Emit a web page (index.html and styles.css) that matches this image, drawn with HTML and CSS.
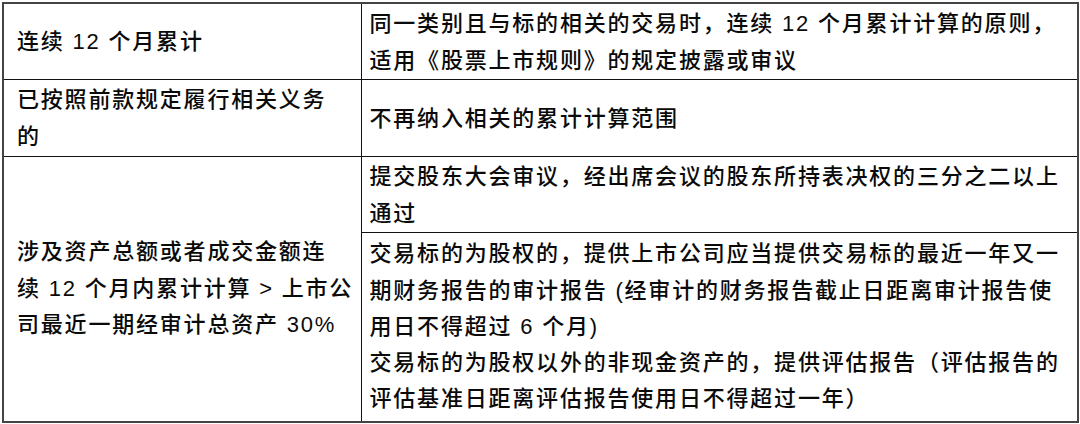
FILE: index.html
```html
<!DOCTYPE html>
<html lang="zh-CN">
<head>
<meta charset="utf-8">
<link rel="stylesheet" href="styles.css">
</head>
<body>
<table class="rules">
  <colgroup><col class="c-left"><col class="c-right"></colgroup>
  <tr class="r1">
    <td class="lcell">连续 12 个月累计</td>
    <td class="rcell">同一类别且与标的相关的交易时，连续 12 个月累计计算的原则，<br>适用《股票上市规则》的规定披露或审议</td>
  </tr>
  <tr class="r2">
    <td class="lcell">已按照前款规定履行相关义务<br>的</td>
    <td class="rcell">不再纳入相关的累计计算范围</td>
  </tr>
  <tr class="r3">
    <td class="lcell l3" rowspan="2">涉及资产总额或者成交金额连<br>续 12 个月内累计计算 &gt; 上市公<br>司最近一期经审计总资产 30%</td>
    <td class="rcell">提交股东大会审议，经出席会议的股东所持表决权的三分之二以上<br>通过</td>
  </tr>
  <tr class="r4">
    <td class="rcell r4c">交易标的为股权的，提供上市公司应当提供交易标的最近一年又一<br>期财务报告的审计报告 (经审计的财务报告截止日距离审计报告使<br>用日不得超过 6 个月)<br>交易标的为股权以外的非现金资产的，提供评估报告（评估报告的<br>评估基准日距离评估报告使用日不得超过一年）</td>
  </tr>
</table>
</body>
</html>
```

FILE: styles.css
```css
html, body {
  margin: 0;
  padding: 0;
  background: #ffffff;
}
body {
  padding: 2px 0 0 2px;
  font-family: "Liberation Sans", "Noto Sans CJK SC", sans-serif;
  color: #0a0a0a;
}
.rules {
  border-collapse: collapse;
  table-layout: fixed;
  width: 1075px;
  border: 2px solid #444444;
}
.c-left { width: 358px; }
.c-right { width: 717px; }
.rules td {
  border: 1px solid #111111;
  padding: 0;
  vertical-align: middle;
  font-size: 22px;
  font-weight: 500;
  letter-spacing: 1.8px;
  line-height: 37px;
  white-space: nowrap;
}
.lcell { padding-left: 13px !important; }
.rcell { padding-left: 8px !important; }
.r1 td { height: 75px; }
.r2 td { height: 76px; }
.r3 td { height: 75px; }
.l3 { line-height: 36.5px !important; }
.r4 td { height: 188px; }
.r4c { line-height: 36.3px !important; }
```
